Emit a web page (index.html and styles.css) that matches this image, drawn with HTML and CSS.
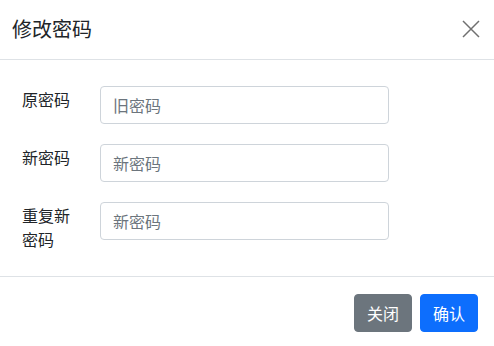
FILE: index.html
```html
<!DOCTYPE html>
<html lang="zh">
<head>
<meta charset="utf-8">
<link rel="stylesheet" href="styles.css">
</head>
<body>
<div class="modal">
  <div class="modal-header">
    <h5 class="modal-title">修改密码</h5>
    <button class="btn-close" aria-label="Close">
      <svg width="18" height="18" viewBox="0 0 18 18"><path d="M1 1L17 17M17 1L1 17" stroke="#707070" stroke-width="1.5" fill="none"/></svg>
    </button>
  </div>
  <div class="modal-body">
    <div class="form-row">
      <label class="form-label">原密码</label>
      <input class="form-control" type="password" placeholder="旧密码">
    </div>
    <div class="form-row">
      <label class="form-label">新密码</label>
      <input class="form-control" type="password" placeholder="新密码">
    </div>
    <div class="form-row">
      <label class="form-label">重复新密码</label>
      <input class="form-control" type="password" placeholder="新密码">
    </div>
  </div>
  <div class="modal-footer">
    <button class="btn btn-secondary">关闭</button>
    <button class="btn btn-primary">确认</button>
  </div>
</div>
</body>
</html>
```
FILE: styles.css
```css
* { box-sizing: border-box; }
html, body { margin: 0; padding: 0; background: #fff; }
body {
  font-family: "Microsoft YaHei", "Noto Sans CJK SC", "Noto Sans", sans-serif;
  color: #212529;
  font-size: 16px;
  line-height: 1.5;
}
.modal { width: 494px; height: 346px; display: flex; flex-direction: column; }
.modal-header {
  height: 60px;
  display: flex;
  align-items: center;
  justify-content: space-between;
  padding: 0 14px 2px 12px;
  border-bottom: 1px solid #dee2e6;
}
.modal-title { margin: 0; font-size: 20px; font-weight: 400; line-height: 1.5; }
.btn-close {
  border: 0; background: transparent; padding: 0; width: 18px; height: 18px;
  display: flex; cursor: pointer;
}
.modal-body {
  padding: 26px 105px 25px 22px;
  display: flex;
  flex-direction: column;
  gap: 20px;
  border-bottom: 1px solid #dee2e6;
}
.form-row { display: grid; grid-template-columns: 78px 1fr; align-items: start; }
.form-label { width: 50px; margin-top: 1px; line-height: 24px; }
.form-control {
  height: 38px;
  padding: 6px 12px;
  font: inherit;
  color: #212529;
  border: 1px solid #ced4da;
  border-radius: 4px;
  background: #fff;
  outline: none;
  width: 289px;
}
.form-control::placeholder { color: #6c757d; opacity: 1; }
.modal-footer {
  display: flex;
  justify-content: flex-end;
  gap: 8px;
  padding: 17px 16px 0;
}
.btn {
  height: 38px;
  padding: 6px 12px;
  font: inherit;
  border: 1px solid transparent;
  border-radius: 4px;
  color: #fff;
  cursor: pointer;
}
.btn-secondary { background: #6c757d; border-color: #6c757d; }
.btn-primary { background: #0d6efd; border-color: #0d6efd; }
```
